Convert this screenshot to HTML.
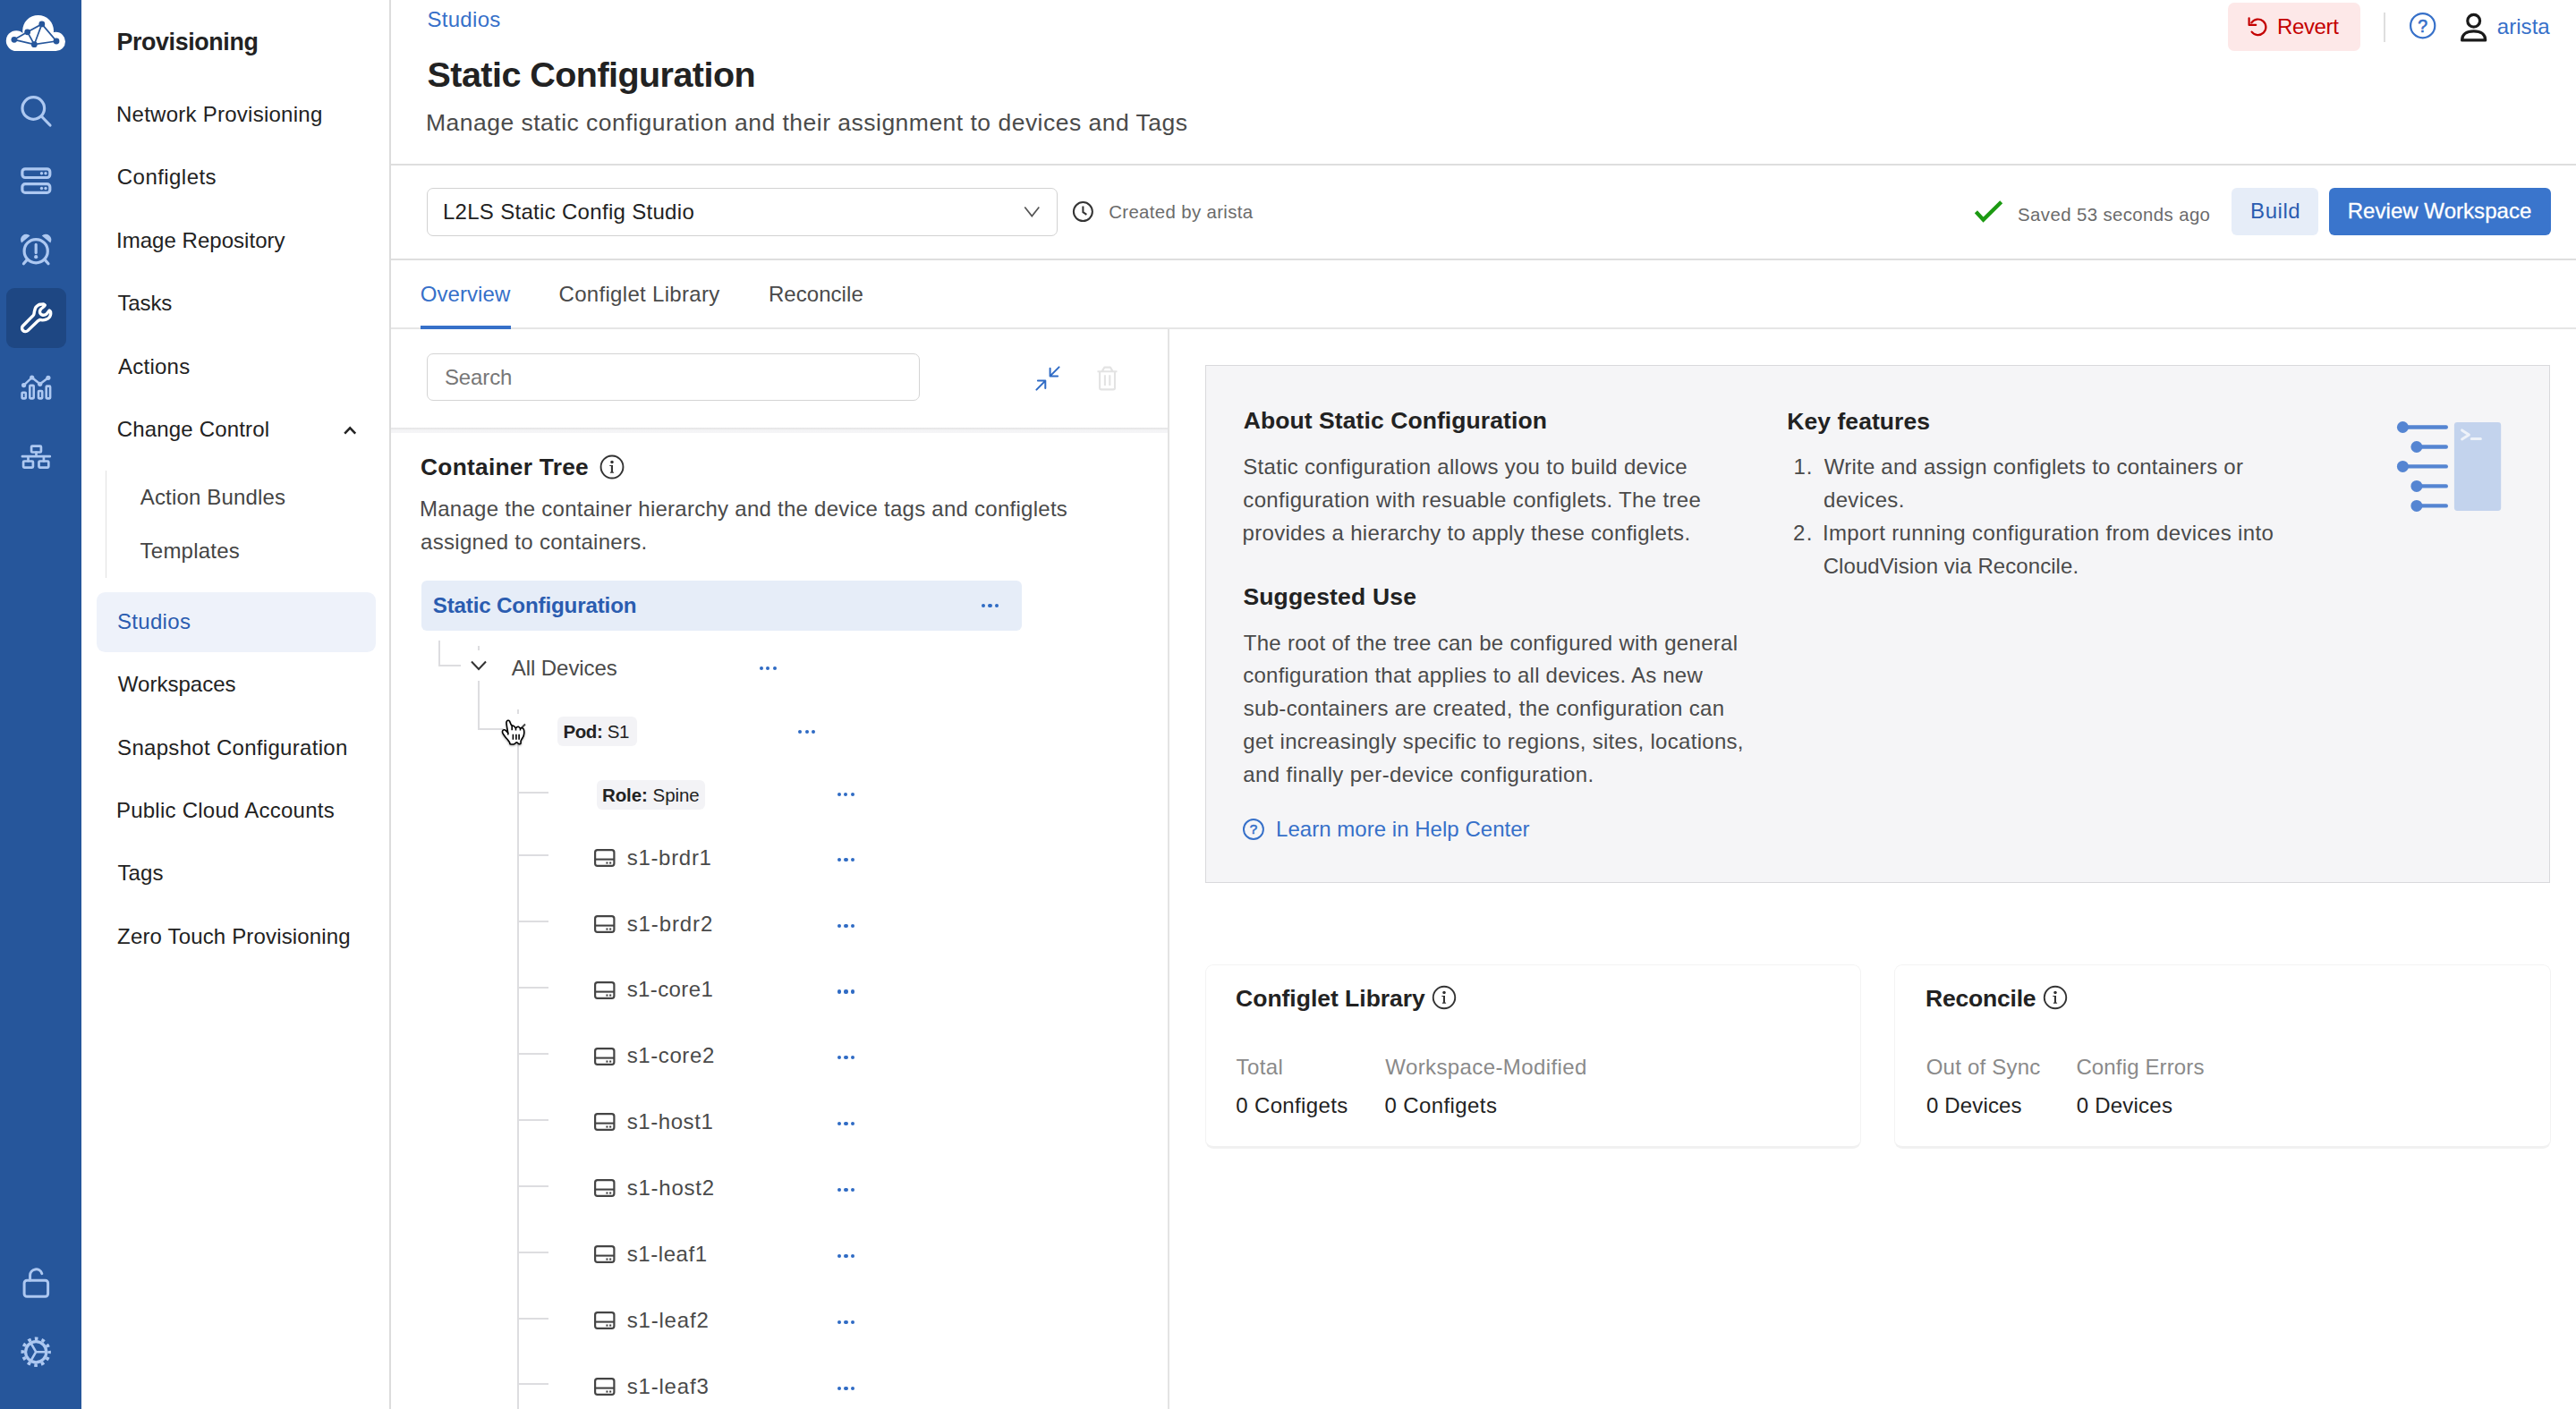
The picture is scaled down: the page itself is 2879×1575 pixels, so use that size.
<!DOCTYPE html>
<html lang="en"><head><meta charset="utf-8"><title>Static Configuration</title>
<style>
html,body{margin:0;padding:0}
body{width:2879px;height:1575px;position:relative;overflow:hidden;background:#fff;font-family:"Liberation Sans",sans-serif;color:#222}
.t{position:absolute;white-space:nowrap;line-height:1;display:block;margin:0;padding:0;font-weight:400;text-decoration:none}
.a{position:absolute}
svg{position:absolute;overflow:visible}
#rail{position:absolute;left:0;top:0;width:91px;height:1575px;background:#26569b}
#rail .act{position:absolute;left:7px;top:322px;width:67px;height:67px;border-radius:9px;background:#1e4783}
#side .bg{position:absolute;left:91px;top:0;width:344px;height:1575px;background:#fff;border-right:2px solid #dcdcdc}
#side .sel{position:absolute;left:107.7px;top:661.5px;width:312.3px;height:67.2px;border-radius:9.5px;background:#eef2fa}
#side .sub{position:absolute;left:117.8px;top:525.5px;width:1.6px;height:120.5px;background:#e2e2e2}
.hl{position:absolute;height:2px;background:#dedede}
.vl{position:absolute;width:2px;background:#dedede}
.tl{position:absolute;background:#dddde0}
.btn{position:absolute;border-radius:6px}
.badge{position:absolute;border-radius:6px;background:#f3f3f6}
.dots{position:absolute;width:20px;height:5px}
.dots i{position:absolute;top:0;width:4.2px;height:4.2px;border-radius:50%;background:#2f6bc4}
.dots i:nth-child(1){left:0}.dots i:nth-child(2){left:7.45px}.dots i:nth-child(3){left:14.9px}
.card{position:absolute;background:#fff;border-radius:9px;box-sizing:border-box;border:1.3px solid #f3f3f3;border-bottom:3px solid #f1f1f1}
</style></head>
<body>
<nav id="rail"><div class="act"></div><svg style="left:7px;top:17px" width="66" height="40" viewBox="0 0 66 40"><g fill="#fff"><circle cx="11.2" cy="28.6" r="11.4"/><circle cx="35.6" cy="17.4" r="17.4"/><circle cx="55.4" cy="29.4" r="10.6"/><rect x="11" y="24" width="44.5" height="16"/></g><g stroke="#26569b" stroke-width="1.7" fill="none"><path d="M8.9 27.3L23.7 18.8L39.8 9.9L56 29L31.3 32.7L8.9 27.3M23.7 18.8L31.3 32.7L39.8 9.9"/></g><g fill="#26569b"><circle cx="8.9" cy="27.3" r="3.4"/><circle cx="23.7" cy="18.8" r="3.4"/><circle cx="39.8" cy="9.9" r="3.4"/><circle cx="56" cy="29" r="3.4"/><circle cx="31.3" cy="32.7" r="3.4"/></g></svg><svg style="left:23px;top:108px" width="35" height="35" viewBox="0 0 35 35" fill="none" stroke="#adc8f1" stroke-width="3.2" stroke-linecap="round"><circle cx="14.3" cy="13" r="12.3"/><path d="M23.3 22L33 32"/></svg><svg style="left:23px;top:186.5px" width="35" height="31" viewBox="0 0 35 31" fill="none" stroke="#adc8f1" stroke-width="3.2"><rect x="1.9" y="1.8" width="30.9" height="9.7" rx="3.2"/><rect x="1.9" y="18.7" width="30.9" height="9.7" rx="3.2"/><g fill="#adc8f1" stroke="none"><circle cx="23.5" cy="6.7" r="1.7"/><circle cx="28" cy="6.7" r="1.7"/><circle cx="23.5" cy="23.5" r="1.7"/><circle cx="28" cy="23.5" r="1.7"/></g></svg><svg style="left:23px;top:262px" width="35" height="35" viewBox="0 0 35 35" fill="none" stroke="#adc8f1" stroke-width="3.2" stroke-linecap="round"><circle cx="17.2" cy="18.7" r="13.1"/><path d="M17.2 11.4V20.6"/><path d="M6.8 28.9L3.4 32.8M27.6 28.9L31 32.8"/><g fill="#adc8f1" stroke="none"><circle cx="17.2" cy="25.2" r="2.1"/><path d="M1 9.4A6.3 6.3 0 0 1 10.6 1.4Z"/><path d="M33.4 9.4A6.3 6.3 0 0 0 23.8 1.4Z"/></g></svg><svg style="left:22px;top:338px" width="37" height="36" viewBox="0 0 37 36" fill="none" stroke="#fff" stroke-width="3.4" stroke-linecap="round" stroke-linejoin="round"><path d="M3.58 26.18L12.60 17.10C13.10 16.58 14.95 15.20 15.60 14.00C16.25 12.80 16.10 11.32 16.50 9.90C16.90 8.48 17.27 6.67 18.00 5.50C18.73 4.33 19.92 3.45 20.90 2.90C21.88 2.35 22.95 2.35 23.90 2.20C24.85 2.05 25.87 1.85 26.60 2.00C27.33 2.15 28.02 2.92 28.30 3.10C27.95 3.48 26.97 4.65 26.20 5.40C25.43 6.15 24.32 6.77 23.70 7.60C23.08 8.42 22.55 9.47 22.50 10.35C22.45 11.22 22.83 12.21 23.40 12.85C23.97 13.49 25.02 14.05 25.90 14.20C26.78 14.35 27.87 14.14 28.70 13.76C29.53 13.38 30.15 12.69 30.90 11.90C31.65 11.11 32.82 9.48 33.20 9.00C33.43 9.32 34.42 10.00 34.60 10.90C34.78 11.80 34.65 13.32 34.30 14.40C33.95 15.48 33.33 16.60 32.50 17.40C31.68 18.20 30.48 18.78 29.35 19.20C28.22 19.62 26.79 19.85 25.70 19.90C24.61 19.95 23.65 19.38 22.80 19.50C21.95 19.62 20.97 20.42 20.60 20.60L9.02 31.62A3.85 3.85 0 0 1 3.58 26.18Z"/></svg><svg style="left:23px;top:418px" width="35" height="30" viewBox="0 0 35 30" fill="none" stroke="#adc8f1" stroke-width="2.6" stroke-linejoin="round"><rect x="1.6" y="20.8" width="4.2" height="6.6" rx="0.8"/><rect x="10.3" y="12.9" width="4.4" height="14.5" rx="0.8"/><rect x="20" y="19" width="4.2" height="8.4" rx="0.8"/><rect x="28.7" y="13.6" width="4.4" height="13.8" rx="0.8"/><path d="M3.6 12.6L12.7 4L21.7 11.3L30.9 4.3" stroke-width="2.4"/><g fill="#adc8f1" stroke="none"><circle cx="3.6" cy="12.6" r="2.6"/><circle cx="12.7" cy="4" r="2.6"/><circle cx="21.7" cy="11.3" r="2.6"/><circle cx="30.9" cy="4.3" r="2.6"/></g></svg><svg style="left:23px;top:496px" width="35" height="30" viewBox="0 0 35 30" fill="none" stroke="#adc8f1" stroke-width="2.7" stroke-linejoin="round"><rect x="12.1" y="2.6" width="10.8" height="6.9" rx="1"/><rect x="3.1" y="19.5" width="10.8" height="7.1" rx="1"/><rect x="20.5" y="19.5" width="10.8" height="7.1" rx="1"/><path d="M17.5 9.5V14.2M1.9 14.2H32.8M8.5 14.2V19.5M25.9 14.2V19.5" stroke-linecap="round"/></svg><svg style="left:25px;top:1417px" width="31" height="35" viewBox="0 0 31 35" fill="none" stroke="#adc8f1" stroke-width="3" stroke-linecap="round"><rect x="2.1" y="14.3" width="26.5" height="18" rx="3"/><path d="M8.6 14V8.6A6.75 6.75 0 0 1 21.8 6.6"/></svg><svg style="left:23px;top:1494px" width="35" height="35" viewBox="0 0 35 35" fill="none" stroke="#adc8f1"><circle cx="17.2" cy="17.2" r="14.9" stroke-width="3.6" stroke-dasharray="3.7 4.1" stroke-dashoffset="1.85"/><circle cx="17.2" cy="17.2" r="11.6" stroke-width="3.2"/><path d="M17.2 17.2L28.70 17.20M17.2 17.2L11.45 27.16M17.2 17.2L11.45 7.24" stroke-width="2.6"/></svg></nav>
<nav id="side"><div class="bg"></div><div class="sel"></div><div class="sub"></div><h2 class="t" style="left:130.5px;top:34.4px;font-size:26.8px;color:#222;font-weight:700;letter-spacing:-0.365px;">Provisioning</h2><a class="t" style="left:130.0px;top:115.9px;font-size:24px;color:#222;letter-spacing:0.253px;">Network Provisioning</a><a class="t" style="left:130.8px;top:186.2px;font-size:24px;color:#222;letter-spacing:0.450px;">Configlets</a><a class="t" style="left:130.0px;top:256.6px;font-size:24px;color:#222;letter-spacing:0.033px;">Image Repository</a><a class="t" style="left:131.5px;top:327.2px;font-size:24px;color:#222;letter-spacing:-0.156px;">Tasks</a><a class="t" style="left:131.9px;top:397.6px;font-size:24px;color:#222;letter-spacing:0.274px;">Actions</a><a class="t" style="left:130.8px;top:468.1px;font-size:24px;color:#222;letter-spacing:0.169px;">Change Control</a><svg style="left:381px;top:474px" width="20" height="14" viewBox="381 474 20 14" fill="none" stroke="#222" stroke-width="2.5"><path d="M385.2 484.6L391.2 478.4L397.2 484.6"/></svg><a class="t" style="left:156.8px;top:544.0px;font-size:24px;color:#444;letter-spacing:0.158px;">Action Bundles</a><a class="t" style="left:156.6px;top:604.4px;font-size:24px;color:#444;letter-spacing:0.218px;">Templates</a><a class="t" style="left:130.9px;top:682.9px;font-size:24px;color:#2a5cb0;letter-spacing:0.325px;">Studios</a><a class="t" style="left:131.8px;top:753.4px;font-size:24px;color:#222;letter-spacing:0.016px;">Workspaces</a><a class="t" style="left:131.1px;top:823.7px;font-size:24px;color:#222;letter-spacing:0.303px;">Snapshot Configuration</a><a class="t" style="left:129.9px;top:894.1px;font-size:24px;color:#222;letter-spacing:0.250px;">Public Cloud Accounts</a><a class="t" style="left:131.4px;top:964.3px;font-size:24px;color:#222;letter-spacing:0.110px;">Tags</a><a class="t" style="left:131.1px;top:1034.7px;font-size:24px;color:#222;letter-spacing:0.161px;">Zero Touch Provisioning</a></nav>
<main>
<header><a class="t" style="left:477.4px;top:9.5px;font-size:24px;color:#3670c9;letter-spacing:0.308px;">Studios</a><h1 class="t" style="left:477.5px;top:63.6px;font-size:39.5px;color:#222;font-weight:700;letter-spacing:-0.542px;">Static Configuration</h1><p class="t" style="left:476.0px;top:123.6px;font-size:26.5px;color:#4a4a4a;letter-spacing:0.484px;">Manage static configuration and their assignment to devices and Tags</p><div class="hl" style="left:437px;top:183px;width:2442px"></div><div class="hl" style="left:437px;top:289px;width:2442px"></div><div class="hl" style="left:437px;top:366px;width:2442px;background:#e6e6e6"></div><div class="btn" style="left:2489.6px;top:3.4px;width:148px;height:53.6px;background:#fde8e8;border-radius:7px"></div><svg style="left:2510px;top:16px" width="28" height="28" viewBox="2510 16 28 28" fill="none" stroke="#c40000" stroke-width="2.2" stroke-linecap="round" stroke-linejoin="round"><path d="M2516.3 25.4A8.8 8.8 0 1 1 2516.6 35.6"/><path d="M2513.6 20.3V27.9H2521.2"/></svg><span class="t" style="left:2545.0px;top:17.7px;font-size:24px;color:#c40000;letter-spacing:-0.359px;">Revert</span><div class="vl" style="left:2664px;top:14px;height:32.5px;width:1.6px"></div><svg style="left:2691.0px;top:11.7px" width="33.4" height="33.4" viewBox="-16.7 -16.7 33.4 33.4"><circle r="13.6" fill="none" stroke="#3670c9" stroke-width="2.2"/><text x="0" y="6.9225" text-anchor="middle" font-family="Liberation Sans, sans-serif" font-weight="400" font-size="19.5" fill="#3670c9" stroke="#3670c9" stroke-width="0.6">?</text></svg><svg style="left:2748px;top:12px" width="34" height="37" viewBox="2748 12 34 37" fill="none" stroke="#1a1a1a" stroke-width="3.2" stroke-linejoin="round"><circle cx="2764.7" cy="23.2" r="6.9"/><path d="M2751.6 44.9C2751.6 38.2 2757 34.9 2764.7 34.9C2772.4 34.9 2777.7 38.2 2777.7 44.9Z"/></svg><a class="t" style="left:2790.8px;top:17.7px;font-size:24px;color:#3670c9;letter-spacing:0.042px;">arista</a><div class="a" style="left:477px;top:210px;width:704.5px;height:53.5px;border:1.5px solid #d2d2d2;border-radius:7px;box-sizing:border-box"></div><span class="t" style="left:494.9px;top:225.3px;font-size:24px;color:#222;letter-spacing:0.306px;">L2LS Static Config Studio</span><svg style="left:1143px;top:229px" width="20" height="16" viewBox="1143 229 20 16" fill="none" stroke="#555" stroke-width="1.7"><path d="M1145.3 231.5L1153.3 241.6L1161.3 231.5"/></svg><svg style="left:1198px;top:224px" width="25" height="25" viewBox="1198 224 25 25" fill="none" stroke="#333" stroke-width="2"><circle cx="1210.4" cy="236.6" r="10.5"/><path d="M1210.4 230.4V237.2L1214.4 239.8"/></svg><span class="t" style="left:1239.2px;top:227.0px;font-size:20.4px;color:#6b6b6b;letter-spacing:0.355px;">Created by arista</span><svg style="left:2206px;top:224px" width="34" height="27" viewBox="2206 224 34 27" fill="none" stroke="#1c9a12" stroke-width="4.3"><path d="M2208.4 236.7L2216.6 245.6L2236.7 225.8"/></svg><span class="t" style="left:2255.1px;top:229.7px;font-size:20.4px;color:#6b6b6b;letter-spacing:0.390px;">Saved 53 seconds ago</span><div class="btn" style="left:2494px;top:210px;width:97px;height:53px;background:#e6edf8"></div><span class="t" style="left:2515.1px;top:224.4px;font-size:24px;color:#2a5cb0;letter-spacing:0.539px;">Build</span><div class="btn" style="left:2603px;top:210px;width:247.5px;height:53px;background:#3a75cc"></div><span class="t" style="left:2623.7px;top:224.4px;font-size:24px;color:#fff;letter-spacing:0.046px;-webkit-text-stroke:0.3px #fff;">Review Workspace</span><a class="t" style="left:469.8px;top:317.4px;font-size:24px;color:#3670c9;letter-spacing:0.059px;">Overview</a><a class="t" style="left:624.5px;top:317.4px;font-size:24px;color:#4a4a4a;letter-spacing:0.311px;">Configlet Library</a><a class="t" style="left:858.9px;top:317.4px;font-size:24px;color:#4a4a4a;letter-spacing:0.058px;">Reconcile</a><div class="a" style="left:470px;top:364px;width:101px;height:3.5px;background:#3670c9"></div></header>
<section id="tree"><div class="vl" style="left:1305px;top:368px;height:1207px;background:#e4e4e4"></div><div class="a" style="left:437px;top:478.2px;width:868px;height:5.8px;background:linear-gradient(#e7e7e8 0,#e9e9ea 38%,#f4f4f6 42%,#f5f5f7 100%)"></div><div class="a" style="left:477px;top:395px;width:551px;height:53px;border:1.5px solid #d4d4d4;border-radius:7px;box-sizing:border-box"></div><span class="t" style="left:496.9px;top:410.1px;font-size:24px;color:#777;letter-spacing:-0.109px;">Search</span><svg style="left:1155px;top:407px" width="32" height="32" viewBox="1155 407 32 32" fill="none" stroke="#2f6bc5" stroke-width="2" stroke-linecap="round" stroke-linejoin="round"><path d="M1183.6 410.4L1173.6 420.4M1173.6 411.7V420.4H1182.1M1158.4 435.6L1168.3 425.6M1159.9 425.6H1168.3V434.1"/></svg><svg style="left:1224px;top:407px" width="28" height="32" viewBox="1224 407 28 32" fill="none" stroke="#e3e3e3" stroke-width="2.1" stroke-linejoin="round"><path d="M1226.5 415.2H1248.5M1231.9 414.6L1234.4 410.6H1240.9L1243.3 414.6M1229.1 415.2V433.6Q1229.1 435.4 1230.9 435.4H1244.2Q1246 435.4 1246 433.6V415.2M1234.9 419.2V431.1M1240.3 419.2V431.1"/></svg><h3 class="t" style="left:470.1px;top:509.0px;font-size:26.3px;color:#222;font-weight:700;letter-spacing:0.271px;">Container Tree</h3><svg style="left:669.30px;top:506.50px" width="30" height="30" viewBox="-15 -15 30 30"><circle r="12.45" fill="none" stroke="#333" stroke-width="1.9"/><circle cx="0" cy="-5.5" r="1.75" fill="#333"/><path d="M-2.7 -2.1H1V5L2.4 6.7H-2.4L-1.1 5V-1H-2.7Z" fill="#333"/></svg><span class="t" style="left:469.0px;top:556.7px;font-size:24px;color:#4a4a4a;letter-spacing:0.261px;">Manage the container hierarchy and the device tags and configlets</span><span class="t" style="left:470.1px;top:593.5px;font-size:24px;color:#4a4a4a;letter-spacing:0.282px;">assigned to containers.</span><div class="a" style="left:470.5px;top:648.5px;width:671px;height:56.5px;border-radius:6px;background:#e6edf8"></div><span class="t" style="left:483.7px;top:664.6px;font-size:24.2px;color:#2a5cb0;font-weight:700;letter-spacing:-0.173px;">Static Configuration</span><span class="dots" style="left:1097.0px;top:674.6px"><i></i><i></i><i></i></span><div class="tl" style="left:489.8px;top:715.7px;width:2px;height:28.7px"></div><div class="tl" style="left:489.8px;top:743.4px;width:25.2px;height:2px"></div><div class="tl" style="left:534.0px;top:721.7px;width:2px;height:5.3px"></div><svg style="left:526px;top:738px" width="18" height="12" viewBox="0 0 18 12" fill="none" stroke="#333" stroke-width="2"><path d="M1 1.5L9 10L17 1.5"/></svg><span class="t" style="left:571.7px;top:735.0px;font-size:24px;color:#4a4a4a;letter-spacing:-0.055px;">All Devices</span><span class="dots" style="left:848.8px;top:745.2px"><i></i><i></i><i></i></span><div class="tl" style="left:534.0px;top:761.0px;width:2px;height:54.3px"></div><div class="tl" style="left:534.0px;top:814.3px;width:29.0px;height:2px"></div><div class="tl" style="left:577.5px;top:792.6px;width:2px;height:5.2px"></div><div class="badge" style="left:623px;top:801.2px;width:88.8px;height:33.1px"></div><span class="t" style="left:629.4px;top:808.0px;font-size:20.5px;color:#222;letter-spacing:-0.400px;"><b>Pod:</b> S1</span><span class="dots" style="left:892.1px;top:815.8px"><i></i><i></i><i></i></span><div class="tl" style="left:577.5px;top:830.0px;width:2px;height:745.0px"></div><svg style="left:569px;top:808px" width="20" height="12" viewBox="0 0 20 12" fill="none" stroke="#444" stroke-width="2"><path d="M1 1.5L9.5 10L18 1.5"/></svg><svg style="left:560px;top:803px;filter:drop-shadow(0 1px 1.2px rgba(0,0,0,.35))" width="28" height="31" viewBox="0 0 28 31"><path d="M7.80 16.20C7.65 15.42 7.15 12.95 6.90 11.50C6.65 10.05 6.45 8.65 6.30 7.50C6.15 6.35 5.95 5.37 6.00 4.60C6.05 3.83 6.27 3.28 6.60 2.90C6.93 2.52 7.53 2.28 8.00 2.30C8.47 2.32 9.03 2.58 9.40 3.00C9.77 3.42 9.93 4.20 10.20 4.80C10.47 5.40 10.75 6.10 11.00 6.60C11.25 7.10 11.42 7.56 11.70 7.80C11.98 8.04 12.22 7.88 12.70 8.05C13.18 8.22 14.03 8.38 14.60 8.80C15.17 9.23 15.72 10.35 16.10 10.60C16.48 10.85 16.40 10.52 16.90 10.30C17.40 10.08 18.40 9.23 19.10 9.30C19.80 9.37 20.63 10.42 21.10 10.70C21.57 10.98 21.48 10.98 21.90 11.00C22.32 11.02 23.03 10.58 23.60 10.80C24.17 11.02 24.93 11.47 25.30 12.30C25.67 13.13 25.80 14.68 25.80 15.80C25.80 16.92 25.50 18.18 25.30 19.00C25.10 19.82 24.98 19.95 24.60 20.70C24.22 21.45 23.42 22.75 23.00 23.50C22.58 24.25 22.28 24.42 22.10 25.20C21.92 25.98 22.32 27.67 21.90 28.20C21.48 28.73 20.35 28.65 19.60 28.40C18.85 28.15 18.22 26.65 17.40 26.70C16.58 26.75 15.90 28.37 14.70 28.70C13.50 29.03 11.03 28.95 10.20 28.70C9.37 28.45 10.12 27.95 9.70 27.20C9.28 26.45 8.53 25.28 7.70 24.20C6.87 23.12 5.62 21.87 4.70 20.70C3.78 19.53 2.73 18.18 2.20 17.20C1.67 16.22 1.47 15.47 1.50 14.80C1.53 14.13 2.03 13.53 2.40 13.20C2.77 12.87 3.23 12.72 3.70 12.80C4.17 12.88 4.52 13.13 5.20 13.70C5.88 14.27 7.37 15.78 7.80 16.20Z" fill="#fff" stroke="#000" stroke-width="1.6" stroke-linejoin="round"/><path d="M12.2 8.2V13.2M16.5 10.6V13.4M21.5 11V13.4M13.4 17.7V23.7M16.9 17.7V23.7M20.1 17.7V23.7M7.8 16V18.5" fill="none" stroke="#000" stroke-width="1.6"/></svg><div class="tl" style="left:578.5px;top:884.8px;width:34.2px;height:2px"></div><div class="badge" style="left:667.1px;top:872px;width:120.8px;height:32.6px"></div><span class="t" style="left:672.9px;top:878.6px;font-size:20.5px;color:#222;letter-spacing:-0.056px;"><b>Role:</b> Spine</span><span class="dots" style="left:935.8px;top:886.1px"><i></i><i></i><i></i></span><div class="tl" style="left:578.5px;top:955.3px;width:34.2px;height:2px"></div><svg style="left:664.1px;top:948.9px" width="24" height="20" viewBox="0 0 24 20"><rect x="1.1" y="1.1" width="21.3" height="17.7" rx="2.6" fill="none" stroke="#444" stroke-width="2.2"/><path d="M1 11.6H22.4" stroke="#444" stroke-width="2.1"/><rect x="13.4" y="14.5" width="2.1" height="2.1" fill="#444"/><rect x="17.1" y="14.5" width="2.1" height="2.1" fill="#444"/></svg><span class="t" style="left:700.7px;top:946.6px;font-size:24px;color:#4a4a4a;letter-spacing:0.697px;">s1-brdr1</span><span class="dots" style="left:936.0px;top:958.6px"><i></i><i></i><i></i></span><div class="tl" style="left:578.5px;top:1029.2px;width:34.2px;height:2px"></div><svg style="left:664.1px;top:1022.8px" width="24" height="20" viewBox="0 0 24 20"><rect x="1.1" y="1.1" width="21.3" height="17.7" rx="2.6" fill="none" stroke="#444" stroke-width="2.2"/><path d="M1 11.6H22.4" stroke="#444" stroke-width="2.1"/><rect x="13.4" y="14.5" width="2.1" height="2.1" fill="#444"/><rect x="17.1" y="14.5" width="2.1" height="2.1" fill="#444"/></svg><span class="t" style="left:700.7px;top:1020.5px;font-size:24px;color:#4a4a4a;letter-spacing:0.897px;">s1-brdr2</span><span class="dots" style="left:936.0px;top:1032.5px"><i></i><i></i><i></i></span><div class="tl" style="left:578.5px;top:1103.1px;width:34.2px;height:2px"></div><svg style="left:664.1px;top:1096.7px" width="24" height="20" viewBox="0 0 24 20"><rect x="1.1" y="1.1" width="21.3" height="17.7" rx="2.6" fill="none" stroke="#444" stroke-width="2.2"/><path d="M1 11.6H22.4" stroke="#444" stroke-width="2.1"/><rect x="13.4" y="14.5" width="2.1" height="2.1" fill="#444"/><rect x="17.1" y="14.5" width="2.1" height="2.1" fill="#444"/></svg><span class="t" style="left:700.7px;top:1094.4px;font-size:24px;color:#4a4a4a;letter-spacing:0.382px;">s1-core1</span><span class="dots" style="left:936.0px;top:1106.4px"><i></i><i></i><i></i></span><div class="tl" style="left:578.5px;top:1176.9px;width:34.2px;height:2px"></div><svg style="left:664.1px;top:1170.5px" width="24" height="20" viewBox="0 0 24 20"><rect x="1.1" y="1.1" width="21.3" height="17.7" rx="2.6" fill="none" stroke="#444" stroke-width="2.2"/><path d="M1 11.6H22.4" stroke="#444" stroke-width="2.1"/><rect x="13.4" y="14.5" width="2.1" height="2.1" fill="#444"/><rect x="17.1" y="14.5" width="2.1" height="2.1" fill="#444"/></svg><span class="t" style="left:700.7px;top:1168.3px;font-size:24px;color:#4a4a4a;letter-spacing:0.596px;">s1-core2</span><span class="dots" style="left:936.0px;top:1180.2px"><i></i><i></i><i></i></span><div class="tl" style="left:578.5px;top:1250.8px;width:34.2px;height:2px"></div><svg style="left:664.1px;top:1244.4px" width="24" height="20" viewBox="0 0 24 20"><rect x="1.1" y="1.1" width="21.3" height="17.7" rx="2.6" fill="none" stroke="#444" stroke-width="2.2"/><path d="M1 11.6H22.4" stroke="#444" stroke-width="2.1"/><rect x="13.4" y="14.5" width="2.1" height="2.1" fill="#444"/><rect x="17.1" y="14.5" width="2.1" height="2.1" fill="#444"/></svg><span class="t" style="left:700.7px;top:1242.1px;font-size:24px;color:#4a4a4a;letter-spacing:0.571px;">s1-host1</span><span class="dots" style="left:936.0px;top:1254.1px"><i></i><i></i><i></i></span><div class="tl" style="left:578.5px;top:1324.7px;width:34.2px;height:2px"></div><svg style="left:664.1px;top:1318.3px" width="24" height="20" viewBox="0 0 24 20"><rect x="1.1" y="1.1" width="21.3" height="17.7" rx="2.6" fill="none" stroke="#444" stroke-width="2.2"/><path d="M1 11.6H22.4" stroke="#444" stroke-width="2.1"/><rect x="13.4" y="14.5" width="2.1" height="2.1" fill="#444"/><rect x="17.1" y="14.5" width="2.1" height="2.1" fill="#444"/></svg><span class="t" style="left:700.7px;top:1316.0px;font-size:24px;color:#4a4a4a;letter-spacing:0.757px;">s1-host2</span><span class="dots" style="left:936.0px;top:1328.0px"><i></i><i></i><i></i></span><div class="tl" style="left:578.5px;top:1398.6px;width:34.2px;height:2px"></div><svg style="left:664.1px;top:1392.2px" width="24" height="20" viewBox="0 0 24 20"><rect x="1.1" y="1.1" width="21.3" height="17.7" rx="2.6" fill="none" stroke="#444" stroke-width="2.2"/><path d="M1 11.6H22.4" stroke="#444" stroke-width="2.1"/><rect x="13.4" y="14.5" width="2.1" height="2.1" fill="#444"/><rect x="17.1" y="14.5" width="2.1" height="2.1" fill="#444"/></svg><span class="t" style="left:700.7px;top:1389.9px;font-size:24px;color:#4a4a4a;letter-spacing:0.581px;">s1-leaf1</span><span class="dots" style="left:936.0px;top:1401.9px"><i></i><i></i><i></i></span><div class="tl" style="left:578.5px;top:1472.5px;width:34.2px;height:2px"></div><svg style="left:664.1px;top:1466.1px" width="24" height="20" viewBox="0 0 24 20"><rect x="1.1" y="1.1" width="21.3" height="17.7" rx="2.6" fill="none" stroke="#444" stroke-width="2.2"/><path d="M1 11.6H22.4" stroke="#444" stroke-width="2.1"/><rect x="13.4" y="14.5" width="2.1" height="2.1" fill="#444"/><rect x="17.1" y="14.5" width="2.1" height="2.1" fill="#444"/></svg><span class="t" style="left:700.7px;top:1463.8px;font-size:24px;color:#4a4a4a;letter-spacing:0.809px;">s1-leaf2</span><span class="dots" style="left:936.0px;top:1475.8px"><i></i><i></i><i></i></span><div class="tl" style="left:578.5px;top:1546.3px;width:34.2px;height:2px"></div><svg style="left:664.1px;top:1539.9px" width="24" height="20" viewBox="0 0 24 20"><rect x="1.1" y="1.1" width="21.3" height="17.7" rx="2.6" fill="none" stroke="#444" stroke-width="2.2"/><path d="M1 11.6H22.4" stroke="#444" stroke-width="2.1"/><rect x="13.4" y="14.5" width="2.1" height="2.1" fill="#444"/><rect x="17.1" y="14.5" width="2.1" height="2.1" fill="#444"/></svg><span class="t" style="left:700.7px;top:1537.7px;font-size:24px;color:#4a4a4a;letter-spacing:0.809px;">s1-leaf3</span><span class="dots" style="left:936.0px;top:1549.6px"><i></i><i></i><i></i></span></section>
<section id="overview"><div class="a" style="left:1347px;top:408px;width:2503px;height:579px;box-sizing:border-box;background:#f5f5f7;border:1.5px solid #d9d9dc;width:1503px"></div><h3 class="t" style="left:1389.7px;top:457.4px;font-size:26.5px;color:#222;font-weight:700;letter-spacing:0.084px;">About Static Configuration</h3><span class="t" style="left:1389.3px;top:509.9px;font-size:24px;color:#4a4a4a;letter-spacing:0.293px;">Static configuration allows you to build device</span><span class="t" style="left:1389.3px;top:546.9px;font-size:24px;color:#4a4a4a;letter-spacing:0.333px;">configuration with resuable configlets. The tree</span><span class="t" style="left:1388.6px;top:583.7px;font-size:24px;color:#4a4a4a;letter-spacing:0.294px;">provides a hierarchy to apply these configlets.</span><h3 class="t" style="left:1389.4px;top:653.7px;font-size:26.5px;color:#222;font-weight:700;letter-spacing:0.170px;">Suggested Use</h3><span class="t" style="left:1389.7px;top:706.6px;font-size:24px;color:#4a4a4a;letter-spacing:0.294px;">The root of the tree can be configured with general</span><span class="t" style="left:1389.3px;top:743.4px;font-size:24px;color:#4a4a4a;letter-spacing:0.218px;">configuration that applies to all devices. As new</span><span class="t" style="left:1389.7px;top:780.0px;font-size:24px;color:#4a4a4a;letter-spacing:0.329px;">sub-containers are created, the configuration can</span><span class="t" style="left:1389.3px;top:816.8px;font-size:24px;color:#4a4a4a;letter-spacing:0.302px;">get increasingly specific to regions, sites, locations,</span><span class="t" style="left:1389.3px;top:853.8px;font-size:24px;color:#4a4a4a;letter-spacing:0.399px;">and finally per-device configuration.</span><svg style="left:1387.1px;top:912.9px" width="27.9" height="27.9" viewBox="-13.95 -13.95 27.9 27.9"><circle r="10.975" fill="none" stroke="#3670c9" stroke-width="1.95"/><text x="0" y="5.396" text-anchor="middle" font-family="Liberation Sans, sans-serif" font-weight="400" font-size="15.2" fill="#3670c9" stroke="#3670c9" stroke-width="0.6">?</text></svg><a class="t" style="left:1426.0px;top:914.6px;font-size:24px;color:#3670c9;letter-spacing:0.033px;">Learn more in Help Center</a><h3 class="t" style="left:1997.2px;top:457.5px;font-size:26.5px;color:#222;font-weight:700;letter-spacing:0.068px;">Key features</h3><span class="t" style="left:2004.4px;top:510.2px;font-size:24px;color:#4a4a4a;letter-spacing:0.952px;">1.</span><span class="t" style="left:2003.9px;top:583.8px;font-size:24px;color:#4a4a4a;letter-spacing:1.477px;">2.</span><span class="t" style="left:2038.8px;top:510.2px;font-size:24px;color:#4a4a4a;letter-spacing:0.225px;">Write and assign configlets to containers or</span><span class="t" style="left:2038.0px;top:547.0px;font-size:24px;color:#4a4a4a;letter-spacing:0.325px;">devices.</span><span class="t" style="left:2036.9px;top:583.8px;font-size:24px;color:#4a4a4a;letter-spacing:0.381px;">Import running configuration from devices into</span><span class="t" style="left:2037.7px;top:620.9px;font-size:24px;color:#4a4a4a;letter-spacing:0.067px;">CloudVision via Reconcile.</span><svg style="left:2670px;top:465px" width="130" height="112" viewBox="2670 465 130 112"><rect x="2742.9" y="472" width="52.3" height="98.9" rx="3.4" fill="#c3d3ed"/><path d="M2685.4 477.5H2733.8" stroke="#5585d2" stroke-width="4.4" stroke-linecap="round"/><circle cx="2685.4" cy="477.5" r="6.5" fill="#5585d2"/><path d="M2700.9 499.5H2733.8" stroke="#5585d2" stroke-width="4.4" stroke-linecap="round"/><circle cx="2700.9" cy="499.5" r="6.5" fill="#5585d2"/><path d="M2685.4 521.4H2733.8" stroke="#5585d2" stroke-width="4.4" stroke-linecap="round"/><circle cx="2685.4" cy="521.4" r="6.5" fill="#5585d2"/><path d="M2700.9 543.4H2733.8" stroke="#5585d2" stroke-width="4.4" stroke-linecap="round"/><circle cx="2700.9" cy="543.4" r="6.5" fill="#5585d2"/><path d="M2700.9 565.4H2733.8" stroke="#5585d2" stroke-width="4.4" stroke-linecap="round"/><circle cx="2700.9" cy="565.4" r="6.5" fill="#5585d2"/><path d="M2751.6 480.9L2759.4 486.1L2751.6 491M2762.2 490.6H2772.4" fill="none" stroke="#eef2f9" stroke-width="3" stroke-linecap="round" stroke-linejoin="round"/></svg><div class="card" style="left:1346.5px;top:1078px;width:733.5px;height:206px"></div><div class="card" style="left:2117px;top:1078px;width:734px;height:206px"></div><h3 class="t" style="left:1381.1px;top:1102.6px;font-size:26.5px;color:#222;font-weight:700;letter-spacing:-0.016px;">Configlet Library</h3><svg style="left:1599.10px;top:1100.10px" width="30" height="30" viewBox="-15 -15 30 30"><circle r="12.25" fill="none" stroke="#333" stroke-width="1.9"/><circle cx="0" cy="-5.5" r="1.75" fill="#333"/><path d="M-2.7 -2.1H1V5L2.4 6.7H-2.4L-1.1 5V-1H-2.7Z" fill="#333"/></svg><span class="t" style="left:1381.5px;top:1180.7px;font-size:24px;color:#8a8a8a;letter-spacing:0.390px;">Total</span><span class="t" style="left:1548.3px;top:1180.7px;font-size:24px;color:#8a8a8a;letter-spacing:0.391px;">Workspace-Modified</span><span class="t" style="left:1381.2px;top:1223.9px;font-size:24px;color:#222;letter-spacing:0.369px;">0 Configets</span><span class="t" style="left:1547.5px;top:1223.9px;font-size:24px;color:#222;letter-spacing:0.399px;">0 Configets</span><h3 class="t" style="left:2152.1px;top:1102.6px;font-size:26.5px;color:#222;font-weight:700;letter-spacing:-0.222px;">Reconcile</h3><svg style="left:2281.50px;top:1100.10px" width="30" height="30" viewBox="-15 -15 30 30"><circle r="12.25" fill="none" stroke="#333" stroke-width="1.9"/><circle cx="0" cy="-5.5" r="1.75" fill="#333"/><path d="M-2.7 -2.1H1V5L2.4 6.7H-2.4L-1.1 5V-1H-2.7Z" fill="#333"/></svg><span class="t" style="left:2152.7px;top:1180.7px;font-size:24px;color:#8a8a8a;letter-spacing:0.221px;">Out of Sync</span><span class="t" style="left:2320.4px;top:1180.7px;font-size:24px;color:#8a8a8a;letter-spacing:0.142px;">Config Errors</span><span class="t" style="left:2153.1px;top:1223.9px;font-size:24px;color:#222;letter-spacing:0.128px;">0 Devices</span><span class="t" style="left:2320.8px;top:1223.9px;font-size:24px;color:#222;letter-spacing:0.216px;">0 Devices</span></section>
</main>
</body></html>
